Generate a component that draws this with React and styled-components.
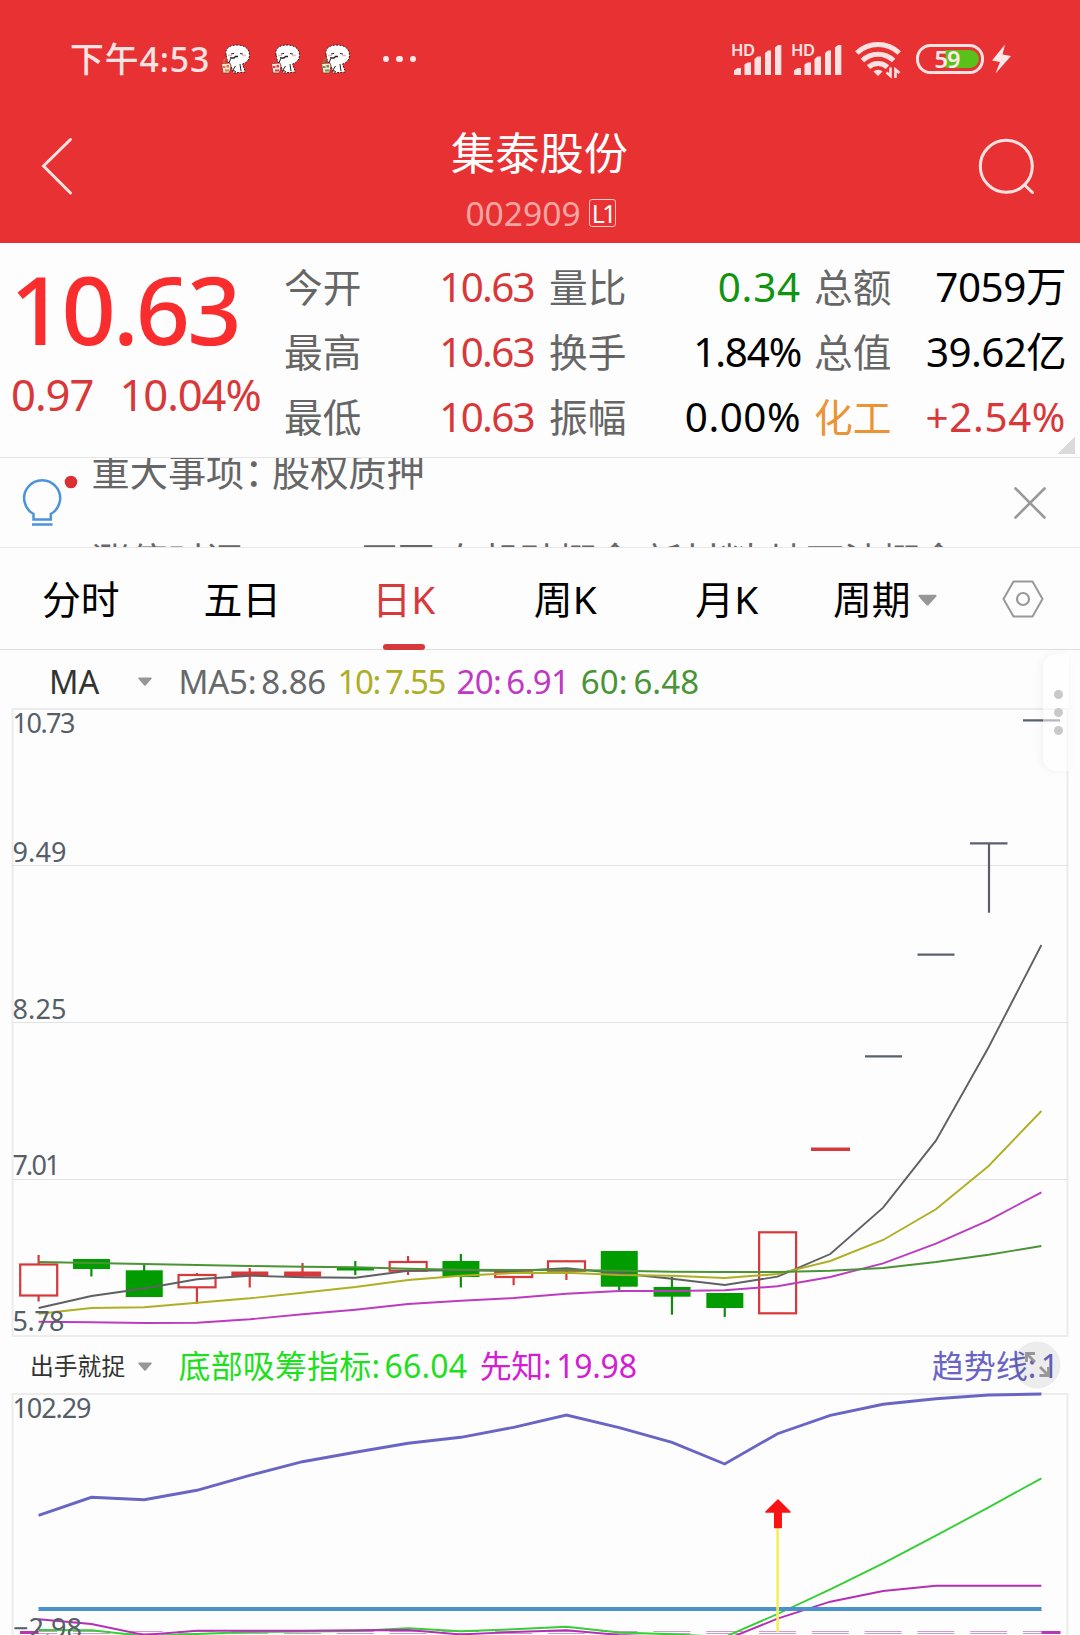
import styled, { createGlobalStyle } from "styled-components";

const GlobalStyle = createGlobalStyle`
*{
  box-sizing:border-box;
}
body{
  margin:0;
  background-color:#fdfdfd;
  font-family:"Noto Sans", "Noto Sans CJK SC", sans-serif;
}
svg{
  display:block;
  flex:none;
  overflow:visible;
}
`

const Screen = styled.div`
width:1080px;
height:1635px;
display:flex;
flex-direction:column;
overflow:hidden;
background-color:#fdfdfd;
`

const Text = styled.span`
display:block;
white-space:pre;
color:${p => p.$color || "inherit"};
font-size:${p => p.$size}px;
line-height:${p => p.$line || p.$size * 1.2}px;
letter-spacing:${p => p.$ls || 0}px;
word-spacing:${p => p.$ws || 0}px;
font-weight:${p => p.$weight || 400};
`

const Header = styled.header`
height:243px;
flex:none;
background-color:#e83133;
`

const StatusBar = styled.div`
height:118px;
padding:0 69px 0 70px;
display:flex;
align-items:center;
color:#ffe3e3;
`

const Notifications = styled.div`
display:flex;
gap:20px;
margin-left:9.5px;
flex:1;
`

const MoreDots = styled.div`
display:flex;
align-items:center;
gap:7.5px;
margin-left:13px;

i{
  width:6.2px;
  height:6.2px;
  border-radius:50%;
  background-color:#ffe9e9;
}
`

const StatusIcons = styled.div`
display:flex;
align-items:center;
`

const WifiBox = styled.div`
margin:0 15px 0 4px;
`

const TitleBar = styled.div`
height:125px;
padding:0 45px 0 41px;
display:grid;
grid-template-columns:58px 1fr 58px;
align-items:flex-start;

> svg{
  margin-top:18px;
}
`

const TitleBox = styled.div`
display:flex;
flex-direction:column;
align-items:center;
padding:8px 0 0 3px;
`

const CodeRow = styled.div`
display:flex;
align-items:center;
gap:8px;
margin:15.5px 0 0 2px;
`

const LevelBadge = styled.span`
width:27px;
height:28px;
border:1px solid #ffc9c9;
border-radius:3px;
color:#fff;
font-size:25px;
line-height:26px;
letter-spacing:-2.5px;
text-indent:2px;
`

const Quote = styled.section`
height:215px;
flex:none;
display:flex;
position:relative;
border-bottom:1px solid #e6e6e6;
`

const PriceBox = styled.div`
width:284px;
flex:none;
padding:17px 0 0 10px;
`

const ChangeRow = styled.div`
display:flex;
gap:26px;
margin-top:8px;
padding-left:1px;
`

const QuoteGrid = styled.div`
display:grid;
grid-template-columns:78px 174px 91px 174px 91px 174px;
grid-auto-rows:65px;
padding-top:11px;
align-items:baseline;
`

const Label = styled.span`
color:${p => p.$color || "#666"};
font-size:38.7px;
line-height:65px;
white-space:nowrap;
padding-left:${p => p.$pad || 0}px;
`

const Value = styled.span`
color:${p => p.$color};
font-size:40.4px;
line-height:65px;
letter-spacing:${p => p.$ls || 0}px;
padding-right:${p => p.$right || 0}px;
text-align:right;
white-space:nowrap;
`

const Corner = styled.i`
position:absolute;
right:5px;
bottom:3px;
width:18px;
height:18px;
background:linear-gradient(135deg, transparent 50%, #dadada 50%);
`

const Notice = styled.section`
height:90px;
flex:none;
display:flex;
border-bottom:1px solid #e9e9e9;
overflow:hidden;
`

const BulbBox = styled.div`
width:91.5px;
flex:none;
padding:19px 0 0 20px;
`

const NoticeLines = styled.div`
flex:1;
height:89px;
overflow:hidden;
color:#666;
font-size:38.2px;

p{
  margin:0;
  height:91px;
  line-height:90px;
  white-space:nowrap;
}
p:first-child{
  margin-top:-32px;
}
p:last-child{
  height:50px;
  line-height:50px;
  margin-top:19px;
  letter-spacing:-0.25px;
}
span{
  margin-right:-10.5px;
}
`

const CloseBox = styled.div`
padding:28px 33px 0 0;
`

const Tabs = styled.nav`
height:102px;
flex:none;
display:flex;
border-bottom:1px solid #dedede;
`

const Tab = styled.div`
width:161.5px;
display:flex;
align-items:center;
justify-content:center;
gap:7px;
position:relative;
font-size:38.8px;
color:${p => p.$active ? "#d83a3c" : "#000"};
padding:1px ${p => p.$right || 0}px 0 0;
line-height:60px;

&::after{
  content:"";
  display:${p => p.$active ? "block" : "none"};
  position:absolute;
  left:60px;
  bottom:-1px;
  width:42px;
  height:6px;
  border-radius:3px;
  background-color:#d5393b;
}

svg{
  margin-top:2px;
}
`

const TabTools = styled.div`
flex:1;
display:flex;
align-items:center;
justify-content:center;
padding-right:3px;
`

const Legend = styled.div`
height:${p => p.$height}px;
flex:none;
display:flex;
align-items:center;
padding-top:${p => p.$top || 0}px;
`

const Picker = styled.div`
width:151.5px;
padding-left:${p => p.$pad}px;
flex:none;
display:flex;
align-items:center;
justify-content:space-between;
`

const Items = styled.div`
display:flex;
align-items:center;
padding-left:27px;
gap:${p => p.$gap}px;
`

const TrendLabel = styled.div`
margin-left:auto;
padding-right:21px;
position:relative;

svg{
  position:absolute;
  right:19px;
  top:-6px;
}
`

const ChartArea = styled.section`
flex:none;
position:relative;
`

const SideHandle = styled.div`
position:absolute;
right:11px;
top:-54px;
width:26px;
height:117px;
border-radius:14px 0 0 14px;
background-color:rgba(255,255,255,0.55);
box-shadow:-2px 0 10px rgba(0,0,0,0.05);
display:flex;
flex-direction:column;
align-items:center;
justify-content:center;
gap:9px;
padding:0 0 1px 4px;

i{
  width:9px;
  height:9px;
  border-radius:50%;
  background-color:#c9c9c9;
}
`

const STEP = 52.78
const cx = i => 38.6 + i * STEP
const points = ys => ys.map((y, i) => `${cx(i).toFixed(1)},${y}`).join(" ")

const RED = "#d8383a"
const GREEN = "#009c00"
const DARK = "#5a606c"

// [type, body top, body bottom, wick top, wick bottom]
const candles = [
  ["up", 1264.5, 1295.5, 1255, 1301.5],
  ["down", 1259, 1269, 1259, 1276.5],
  ["down", 1270.3, 1297, 1265, 1297],
  ["up", 1275, 1287.3, 1273, 1304],
  ["flat", 1271.5, 1276, 1268, 1287.5],
  ["flat", 1271.5, 1276.7, 1263, 1278],
  ["down", 1267, 1270.5, 1261, 1275],
  ["up", 1262, 1270.7, 1256, 1275],
  ["down", 1261, 1277, 1254, 1287.5],
  ["up", 1272.3, 1277, 1272, 1285.3],
  ["up", 1261.3, 1270.7, 1260.5, 1280],
  ["down", 1251, 1286.7, 1251, 1290.7],
  ["down", 1287, 1296.7, 1276.7, 1314.7],
  ["down", 1293, 1308, 1293, 1317],
  ["up", 1232.3, 1313.3, 1232, 1313],
]

const ma5 = [1308, 1296, 1288.5, 1279.3, 1275.7, 1277.3, 1277.7, 1270.7, 1270.3, 1271, 1268.3, 1273.3, 1278.7, 1285, 1276.7, 1254, 1207.7, 1140.7, 1047.3, 945]
const ma10 = [1313.7, 1308, 1307.3, 1302.7, 1298.3, 1292.7, 1287, 1280, 1275.7, 1273, 1272.7, 1275, 1275.7, 1278, 1274, 1261, 1240, 1209.3, 1166, 1111]
const ma20 = [1321.7, 1322.3, 1323, 1322.7, 1319.3, 1314.3, 1309.7, 1304, 1300.7, 1298, 1293.7, 1291, 1291, 1290.3, 1286.3, 1277, 1263.3, 1243.7, 1220.3, 1192.3]
const ma60 = [1262, 1263, 1264, 1265, 1266, 1266.7, 1267.3, 1268.7, 1269.7, 1270, 1270, 1270.7, 1271.7, 1272, 1272, 1270.7, 1268, 1262, 1254.7, 1246]

const trend = [1515.3, 1497.3, 1499.7, 1490.3, 1475.3, 1461.7, 1452.3, 1443.3, 1437.3, 1427.3, 1415, 1427.7, 1442.3, 1464, 1433.7, 1415.3, 1404.3, 1398.7, 1395, 1394]
const bottom = [1630, 1630.3, 1636, 1634, 1632, 1631.5, 1631, 1628.3, 1631.3, 1629.3, 1626.7, 1632.5, 1634.3, 1637, 1614, 1589.3, 1563.3, 1535.7, 1507.3, 1478.3]
const prophet = [1619.3, 1624, 1635, 1630.7, 1630.7, 1630.7, 1630.3, 1630, 1634.5, 1632, 1630.3, 1635, 1637, 1640, 1618.7, 1601.7, 1591, 1585.7, 1585.7, 1585.7]

const quotes = [
  ["今开", "10.63", RED, -1.7, "量比", "0.34", "#109410", 0.8, "总额", "7059万", "#000", -0.4],
  ["最高", "10.63", RED, -1.7, "换手", "1.84%", "#000", -1.2, "总值", "39.62亿", "#000", -0.6],
  ["最低", "10.63", RED, -1.7, "振幅", "0.00%", "#000", 0.5, "化工", "+2.54%", RED, 0.6],
]

const Caret = ({ w = 14, h = 9 }) => (
  <svg width={w} height={h} viewBox="0 0 14 9">
    <path d="M1 .5h12a.8.8 0 0 1 .6 1.3L7.9 8.2a1.2 1.2 0 0 1-1.8 0L.4 1.8A.8.8 0 0 1 1 .5z" fill="#979797" />
  </svg>
)

const Mascot = ({ drink }) => (
  <svg width="30" height="30" viewBox="0 0 30 30">
    <path d="M6 11C4.500 4 10 1 17 1c8 0 12.500 4 12.500 10 0 5-3 8-7 9l1 3 2 5-12 1-3-8C8 19 7 16 6 11z" fill="#fff" stroke="#3a1515" strokeWidth="1" strokeDasharray="2 1.300" />
    <path d="M10 14h4l1.500-1.500h2.500" stroke="#222" strokeWidth="1.300" fill="none" />
    <path d="M11 10l3-.6M20 9.500l3 .6M10.500 15l-1.500 4M15.500 22l-2.500 4 3 2M20 20l1 7" stroke="#222" strokeWidth="1" fill="none" />
    <path d="M8 11.500h4M22 11.500h4" stroke="#f6b4b4" strokeWidth="1.600" />
    <path d="M1.500 19.500l8.500-.5 1 3-1.500 7H3z" fill="#fbe3dc" stroke="#7a3a2a" strokeWidth=".8" />
    <path d="M3 22h2.500v2H3zM6.500 21H9v2.500H6.500zM5 25.500h4v2H5z" fill={drink} />
    <path d="M4 19.500V16l2-1" stroke={drink} strokeWidth="1.200" fill="none" />
  </svg>
)

const Signal = () => (
  <svg width="60" height="34" viewBox="0 0 60 34">
    <text x="0" y="14" fontSize="16.500" fontWeight="600" fill="#ffe3e3" textLength="24">HD</text>
    <path d="M3 33v-4.500l3.500-2.500H10v7zM13.500 33V22.500l3-2H20V33zM23.500 33V17l3-2.500H30V33zM34 33V11l3-2.500h3V33zM44 33V5.500L47 3h3.300v30z" fill="#ffe3e3" />
  </svg>
)

const Wifi = () => (
  <svg width="46" height="36" viewBox="0 0 46 36">
    <g fill="none" stroke="#ffe3e3" strokeWidth="5">
      <path d="M1.800 12a31 31 0 0 1 42.400 0" />
      <path d="M7.400 19.500a22.500 22.500 0 0 1 31.200 0" />
      <path d="M13.500 26.200a14 14 0 0 1 19 0" />
    </g>
    <path d="M18.500 30.500a6.500 6.500 0 0 1 9 0L23 35z" fill="#ffe3e3" />
    <path d="M31.500 31.500l4 3.500v-8.500M44.500 32l-4-3.500V37" stroke="#ffe3e3" strokeWidth="2.600" fill="none" />
  </svg>
)

const Battery = () => (
  <svg width="68" height="30" viewBox="0 0 68 30">
    <rect x="1.500" y="1.500" width="65" height="27" rx="13" fill="none" stroke="#ffe3e3" strokeWidth="3" />
    <path d="M29.500 6H54a9 9 0 0 1 0 18H29.500z" fill="#58c21a" />
    <text x="18.500" y="23.500" fontSize="23.500" fontWeight="600" fill="#ffe9e9" textLength="26">59</text>
  </svg>
)

const CandleChart = () => (
  <ChartArea>
    <svg width="1080" height="629" viewBox="0 708 1080 629">
      <rect x="12.500" y="709" width="1055" height="627" fill="none" stroke="#ececec" strokeWidth="2" />
      <path d="M12 865.500H1068M12 1022.500H1068M12 1179.500H1068" stroke="#e2e2e2" />
      {candles.map(([type, top, bot, hi, lo], i) => (
        <g key={i}>
          {type === "up" ? (
            <>
              <path d={`M${cx(i)} ${hi}V${top}M${cx(i)} ${bot}V${lo}`} stroke={RED} strokeWidth="2.200" />
              <rect x={cx(i) - 18.4} y={top} width="37" height={bot - top} fill="none" stroke={RED} strokeWidth="2.200" />
            </>
          ) : (
            <>
              <path d={`M${cx(i)} ${hi}V${lo}`} stroke={type === "flat" ? RED : "#108a10"} strokeWidth="2.200" />
              <rect x={cx(i) - 18.4} y={top} width="37" height={bot - top} fill={type === "flat" ? RED : GREEN} />
            </>
          )}
        </g>
      ))}
      <path d="M811 1149.300H850" stroke={RED} strokeWidth="3.600" />
      <path d="M865 1056.300H902M917.500 954.700H954.500M970 843.300H1007.500M989 843V912.700M1023 720.300H1060" stroke={DARK} strokeWidth="2.200" />
      <g fill="none" strokeWidth="1.900">
        <polyline points={points(ma5)} stroke="#5f6062" />
        <polyline points={points(ma10)} stroke="#b0ae22" />
        <polyline points={points(ma20)} stroke="#bb3cc0" />
        <polyline points={points(ma60)} stroke="#4a9436" />
      </g>
      <g fontSize="27" fill="#565f69">
        <text x="12.500" y="732.500" textLength="63">10.73</text>
        <text x="12.500" y="862" textLength="54">9.49</text>
        <text x="12.500" y="1018.500" textLength="54">8.25</text>
        <text x="12.500" y="1174.500" textLength="48">7.01</text>
        <text x="12.500" y="1330.500" textLength="52">5.78</text>
      </g>
    </svg>
    <SideHandle><i /><i /><i /></SideHandle>
  </ChartArea>
)

const IndicatorChart = () => (
  <ChartArea>
    <svg width="1080" height="242" viewBox="0 1393 1080 242">
      <path d="M12.500 1640V1394H1067.500V1640" fill="none" stroke="#ececec" strokeWidth="2" />
      <g stroke="#cf9ad0" strokeWidth="1" fill="none">
        {prophet.map((_, i) => (
          <path key={i} d={`M${cx(i) - 18.5} 1631.500h37m0 2h-37`} />
        ))}
      </g>
      <path d="M20 1632.500H38.600M1041.500 1632.500H1060.500" stroke="#b935b9" strokeWidth="3" />
      <polyline points={points(trend)} fill="none" stroke="#6a65c4" strokeWidth="2.900" />
      <polyline points={points(bottom)} fill="none" stroke="#35cf35" strokeWidth="1.900" />
      <polyline points={points(prophet)} fill="none" stroke="#b52fb5" strokeWidth="1.900" />
      <path d="M38.500 1609H1041.500" stroke="#4a92ce" strokeWidth="4" />
      <path d="M777.600 1527V1632" stroke="#f6ee55" strokeWidth="2.600" />
      <path d="M778 1500l12 12h-8.800V1527.500h-6.500V1512h-8.800z" fill="#f81414" stroke="#f81414" strokeWidth="1.500" strokeLinejoin="round" />
      <g fontSize="27" fill="#565f69">
        <text x="12.500" y="1417.500" textLength="79">102.29</text>
        <text x="13" y="1637.500" textLength="69">−2.98</text>
      </g>
    </svg>
  </ChartArea>
)

const App = () => {
  return (
    <Screen>
      <GlobalStyle />
      <Header>
        <StatusBar>
          <Text $size={33.8} $line={40} $weight={500} $ls={0.9}>下午4:53</Text>
          <Notifications>
            <Mascot drink="#e07b3c" />
            <Mascot drink="#e03c50" />
            <Mascot drink="#5aa03c" />
            <MoreDots><i /><i /><i /></MoreDots>
          </Notifications>
          <StatusIcons>
            <Signal />
            <Signal />
            <WifiBox><Wifi /></WifiBox>
            <Battery />
            <svg width="27" height="30" viewBox="0 0 27 30">
              <path d="M21 .5L8 16.500l8 1.500-4.500 11.500L27 12l-8.500-1.500z" fill="#ffe9e9" />
            </svg>
          </StatusIcons>
        </StatusBar>
        <TitleBar>
          <svg width="34" height="62" viewBox="0 0 34 62">
            <path d="M29.500 3.500L2.500 30l27 27" fill="none" stroke="#ffe3e3" strokeWidth="3" strokeLinecap="round" />
          </svg>
          <TitleBox>
            <Text $size={44.3} $line={54} $color="#fff">集泰股份</Text>
            <CodeRow>
              <Text $size={33.6} $line={34} $color="#f7a5a3">002909</Text>
              <LevelBadge>L1</LevelBadge>
            </CodeRow>
          </TitleBox>
          <svg width="58" height="62" viewBox="0 0 58 62">
            <circle cx="29.300" cy="30.300" r="26" fill="none" stroke="#ffe3e3" strokeWidth="3" />
            <path d="M47.500 49l8 7.500" stroke="#ffe3e3" strokeWidth="3" strokeLinecap="round" />
          </svg>
        </TitleBar>
      </Header>

      <Quote>
        <PriceBox>
          <Text $size={95} $line={96} $ls={-2.9} $weight={500} $color="#f92c2e">10.63</Text>
          <ChangeRow>
            <Text $size={43.6} $line={60} $ls={-1} $color={RED}>0.97</Text>
            <Text $size={43.6} $line={60} $ls={-1.1} $color={RED}>10.04%</Text>
          </ChangeRow>
        </PriceBox>
        <QuoteGrid>
          {quotes.map(([l1, v1, c1, s1, l2, v2, c2, s2, l3, v3, c3, s3]) => [
            <Label key={l1}>{l1}</Label>,
            <Value key={l1 + "v"} $color={c1} $ls={s1} $right={2}>{v1}</Value>,
            <Label key={l2} $pad={13}>{l2}</Label>,
            <Value key={l2 + "v"} $color={c2} $ls={s2}>{v2}</Value>,
            <Label key={l3} $pad={13} $color={l3 === "化工" ? "#ea9433" : "#666"}>{l3}</Label>,
            <Value key={l3 + "v"} $color={c3} $ls={s3}>{v3}</Value>,
          ])}
        </QuoteGrid>
        <Corner />
      </Quote>

      <Notice>
        <BulbBox>
          <svg width="60" height="52" viewBox="0 0 60 52">
            <path d="M13.500 42.500v-5.500a18 18 0 1 1 17.300 0v5.500zM12 47.500h20.500" fill="none" stroke="#4c92dc" strokeWidth="2.500" />
            <circle cx="51" cy="5" r="6.300" fill="#dc2f31" />
          </svg>
        </BulbBox>
        <NoticeLines>
          <p>重大事项<span>：</span>股权质押</p>
          <p>涨停时间 10:14 原因 有机硅概念,新材料,地下油概念</p>
        </NoticeLines>
        <CloseBox>
          <svg width="34" height="34" viewBox="0 0 34 34">
            <path d="M2.500 2.500l29 29M31.500 2.500l-29 29" stroke="#999" strokeWidth="2.600" strokeLinecap="round" />
          </svg>
        </CloseBox>
      </Notice>

      <Tabs>
        <Tab>分时</Tab>
        <Tab>五日</Tab>
        <Tab $active>日K</Tab>
        <Tab>周K</Tab>
        <Tab>月K</Tab>
        <Tab $right={7}>周期<Caret w={19} h={12} /></Tab>
        <TabTools>
          <svg width="42" height="38" viewBox="0 0 42 38">
            <path d="M11.500 1.500h19L40.500 19l-10 17.500h-19L1.500 19z" fill="none" stroke="#999" strokeWidth="2" strokeLinejoin="round" />
            <circle cx="21" cy="19" r="6" fill="none" stroke="#999" strokeWidth="2.200" />
          </svg>
        </TabTools>
      </Tabs>

      <Legend $height={58} $top={5}>
        <Picker $pad={49}>
          <Text $size={32.5} $color="#333">MA</Text>
          <Caret />
        </Picker>
        <Items $gap={11.5}>
          <Text $size={33} $ws={-3.5} $ls={-0.2} $color="#66686a">MA5: 8.86</Text>
          <Text $size={33} $ws={-2} $ls={-1.4} $color="#adad26">10: 7.55</Text>
          <Text $size={33} $ws={-3} $ls={-0.6} $color="#c038c4">20: 6.91</Text>
          <Text $size={33} $ws={-3} $ls={0.1} $color="#4a9436">60: 6.48</Text>
        </Items>
      </Legend>
      <CandleChart />

      <Legend $height={56} $top={2}>
        <Picker $pad={30}>
          <Text $size={23.8} $color="#333">出手就捉</Text>
          <Caret />
        </Picker>
        <Items $gap={12.5}>
          <Text $size={32} $ws={-4} $ls={0.15} $color="#1fdf1f">底部吸筹指标: 66.04</Text>
          <Text $size={32} $ws={-3} $ls={-0.3} $color="#d21fd2">先知: 19.98</Text>
        </Items>
        <TrendLabel>
          <Text $size={32} $ws={-4} $color="#6a65c4">趋势线: 1</Text>
          <svg width="48" height="48" viewBox="0 0 48 48">
            <circle cx="24" cy="24" r="23.500" fill="#000" fillOpacity=".065" />
            <path d="M13.500 21v-8.500H22M14 13l8 8M26.500 34.500h9V26M35 34l-8-8" fill="none" stroke="#979797" strokeWidth="2.800" />
          </svg>
        </TrendLabel>
      </Legend>
      <IndicatorChart />
    </Screen>
  )
}

export default App;
